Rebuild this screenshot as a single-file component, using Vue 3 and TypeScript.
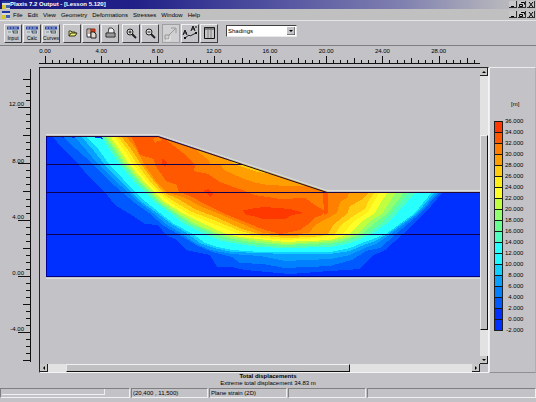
<script setup lang="ts">
import { ref } from 'vue'

interface Tick { at: number; size: number }
interface Zone { color: string; points: string }

const menus: string[] = ['File', 'Edit', 'View', 'Geometry', 'Deformations', 'Stresses', 'Window', 'Help']
const programs: string[] = ['Input', 'Calc', 'Curves']
const display = ref('Shadings')

const tickSize = (i: number): number => (i % 8 === 0 ? 12 : i % 4 === 0 ? 7 : 4)

const topTicks: Tick[] = Array.from({ length: 62 }, (_, i) => ({
  at: Math.round(6 + i * 7.03),
  size: i % 8 === 0 ? 7 : i % 4 === 0 ? 5 : 3,
}))
const topLabels = [0, 4, 8, 12, 16, 20, 24, 28].map((v) => ({ text: v.toFixed(2), x: 6 + v * 14.06 }))

const sideTicks: Tick[] = Array.from({ length: 41 }, (_, i) => ({
  at: Math.round(12 + i * 7.03),
  size: tickSize(i + 4),
}))
const sideLabels = [12, 8, 4, 0, -4].map((v) => ({ text: v.toFixed(2), y: 208 - v * 14.06 }))

const scale: string[] = [
  '#ff3800', '#ff5800', '#ff8000', '#ffa000', '#ffcc10', '#ffee18', '#ffff28', '#c0ff40', '#90ff70',
  '#68ff90', '#50ffc0', '#28ffff', '#20f8ff', '#10d0ff', '#08a0ff', '#0080ff', '#0058ff', '#0030ff', '#0030ff',
]
const scaleLabels: string[] = Array.from({ length: 20 }, (_, i) => (36 - i * 2).toFixed(3))

// Each isoline runs down the left flank, along the base and up the right flank.
const zones: Zone[] = [
  { color: '#0058ff', points: '52,136 62,148 73,158 90,178 104,191 115,205 130,214 145,224 158,225 166,235 175,239 186,250 210,255 217,267 232,267 245,270 290,274 330,271 360,269 372,256 385,250 402,235 425,213 443,192' },
  { color: '#0080ff', points: '62,136 76,149 85,157 92,164 107,179 122,192 135,203 149,213 164,226 178,234 196,245 212,252 232,257 240,263 263,264 285,268 330,266 352,260 366,251 380,248 396,234 421,213 440,192' },
  { color: '#08a0ff', points: '74,136 87,151 98,164 113,179 128,192 139,202 153,213 166,224 182,234 195,243 210,250 232,254 260,256 285,261 330,259 350,255 365,248 376,244 391,234 419,213 438,192' },
  { color: '#10d0ff', points: '81,136 94,151 104,164 118,179 131,192 143,203 157,213 170,223 188,234 200,243 214,248 232,252 260,253 285,254 330,254 350,251 364,245 375,241 388,234 417,213 435,192' },
  { color: '#28ffff', points: '86,136 99,150 109,164 123,179 135,192 146,202 160,213 174,224 193,234 205,243 218,247 232,250 260,252 285,252 330,252 350,248 362,243 373,239 386,234 415,213 432,192' },
  { color: '#50ffc0', points: '101,136 110,150 119,164 133,180 144,192 155,202 170,213 184,224 205,234 218,240 232,243 258,247 285,248 330,247 347,244 361,239 372,234 386,224 397,213 407,202 416,192' },
  { color: '#68ff90', points: '103,136 112,149 122,164 136,180 147,192 157,202 173,213 189,224 211,234 222,239 232,241 258,245 285,247 330,245 347,241 358,238 367,234 380,224 392,213 401,202 409,192' },
  { color: '#90ff70', points: '105,136 114,149 124,164 138,180 149,192 160,203 175,213 192,224 215,234 232,239 258,243 285,245 330,243 345,240 362,234 376,222 388,213 396,203 404,192' },
  { color: '#c0ff40', points: '107,136 117,150 126,164 140,180 151,192 162,202 178,213 196,224 219,234 232,237 258,241 285,244 330,241 345,238 357,234 369,222 383,213 389,203 396,192' },
  { color: '#ffff28', points: '110,136 119,149 129,164 142,179 154,192 165,202 182,213 200,222 226,234 240,237 258,239 285,242 330,240 350,234 361,222 375,213 381,202 388,192' },
  { color: '#ffee18', points: '114,136 124,150 133,164 145,179 157,192 170,202 187,213 208,222 234,232 245,236 285,240 318,238 343,234 353,222 368,212 374,202 380,192' },
  { color: '#ffcc10', points: '117,136 128,150 137,164 149,180 160,192 172,200 190,211 216,221 240,231 255,235 285,238 312,237 335,234 341,225 355,215 365,209 369,200 375,192' },
  { color: '#ffa000', points: '121,136 131,149 141,164 153,180 163,192 178,199 195,209 218,218 242,229 259,234 285,236 310,235 328,234 334,224 347,214 350,206 361,200 368,193 368,192' },
  { color: '#ff8000', points: '126,136 136,149 144,164 155,180 166,192 183,197 202,207 222,215 247,226 263,233 285,235 309,233 315,225 326,219 337,213 340,202 348,197 349,192' },
]

// Closed pockets of the high bands, drawn over the isolines.
const pockets: Zone[] = [
  { color: '#ff8000', points: '158,136 327,192 349,192 340,202 300,198 190,160' },
  { color: '#ff5800', points: '131,136 158,136 165,139 174,146 187,156 195,165 194,171 208,174 220,182 245,191 255,195 280,199 305,198 315,205 325,211 322,215 314,218 307,225 300,230 280,234 262,229 245,222 225,214 205,204 190,196 178,191 177,185 166,181 155,165 154,159 140,155 137,148' },
  { color: '#ff8000', points: '153,139 158,137 163,140 158,141 155,143' },
  { color: '#ff5800', points: '323,192 328,192 328,213 324,215' },
  { color: '#ffa000', points: '193,147 199,153 209,160 210,164 221,165 224,170 242,178 253,182 267,185 290,186 308,186' },
  { color: '#ffcc10', points: '227,159 236,165 245,168 258,172 270,174 285,178' },
  { color: '#ffee18', points: '236,162 240,164 259,170 266,171' },
  { color: '#ff3800', points: '243,210 245,210 256,208 264,207 290,209 304,213 292,215 285,219 262,219 254,216 246,215' },
  { color: '#ff3800', points: '162,159 164,159 167,163 165,167 162,163' },
  { color: '#ff3800', points: '203,191 208,189 211,192 214,194 210,197 206,193' },
]
</script>

<template>
  <div class="window">
    <header class="bar title">
      <svg class="logo" viewBox="0 0 8 8" aria-hidden="true">
        <rect width="8" height="8" fill="#d8d8d8" /><rect width="8" height="2" fill="#2038a0" />
        <rect y="4" width="4" height="4" fill="#d8c830" /><rect x="4" y="4" width="4" height="3" fill="#4060b0" />
      </svg>
      <h1>Plaxis 7.2 Output - [Lesson 5.120]</h1>
      <div class="controls">
        <button aria-label="Minimize"><svg viewBox="0 0 8 7"><path d="M2 5.5h3" /></svg></button>
        <button aria-label="Restore"><svg viewBox="0 0 8 7"><path d="M3 1.5h3.5v2M1.5 3.5h3v2h-3z" /></svg></button>
        <button aria-label="Close"><svg viewBox="0 0 8 7"><path d="M2 1l4 5M6 1l-4 5" /></svg></button>
      </div>
    </header>

    <nav class="bar menu">
      <svg class="logo" viewBox="0 0 8 8" aria-hidden="true">
        <rect width="8" height="8" fill="#d8d8d8" /><rect width="8" height="2" fill="#2038a0" />
        <rect y="4" width="4" height="4" fill="#d8c830" /><rect x="4" y="4" width="4" height="3" fill="#4060b0" />
      </svg>
      <button v-for="m in menus" :key="m" class="item">{{ m }}</button>
      <div class="controls">
        <button aria-label="Minimize document"><svg viewBox="0 0 8 7"><path d="M2 5.5h3" /></svg></button>
        <button aria-label="Restore document"><svg viewBox="0 0 8 7"><path d="M3 1.5h3.5v2M1.5 3.5h3v2h-3z" /></svg></button>
        <button aria-label="Close document"><svg viewBox="0 0 8 7"><path d="M2 1l4 5M6 1l-4 5" /></svg></button>
      </div>
    </nav>

    <div class="toolbar">
      <div class="group">
        <button v-for="p in programs" :key="p" class="tool program">
          <svg viewBox="0 0 12 8" aria-hidden="true">
            <rect width="12" height="8" fill="#d0d4d8" /><rect width="12" height="3" fill="#3048a0" />
            <path d="M1 1.5h2m1 0h2m1 0h3" stroke="#a8b8e8" />
            <path d="M1 4.5h3v2H1z" fill="#a0b0b0" /><path d="M5 4h6v3H6z" fill="#506080" /><path d="M7 5.5h3" stroke="#c8d890" />
          </svg>
          <span>{{ p }}</span>
        </button>
      </div>
      <div class="group">
        <button class="tool" aria-label="Open">
          <svg viewBox="0 0 16 16"><path d="M5 11V6h2l1 1h3v1" fill="#e8e880" stroke="#404020" /><path d="M5 11l2-3h6l-2 3z" fill="#f0f070" stroke="#303010" /></svg>
        </button>
        <button class="tool" aria-label="Copy">
          <svg viewBox="0 0 16 16"><path d="M4 4h4v8H4z" fill="#fff" stroke="#303030" /><path d="M8 4h4v5H8z" fill="#e03818" stroke="#903010" /><path d="M8 7h3l2 2v4H8z" fill="#e0d8d0" stroke="#202020" /><path d="M5 6h2M5 8h2" stroke="#806040" /></svg>
        </button>
        <button class="tool" aria-label="Print">
          <svg viewBox="0 0 16 16"><path d="M6 8l1-5h3l2 2v3" fill="#f0f0f0" stroke="#404040" /><path d="M4 8h9v4H4z" fill="#c0c0c0" stroke="#202020" /><path d="M5 10h7" stroke="#707070" /></svg>
        </button>
      </div>
      <div class="group">
        <button class="tool" aria-label="Zoom in">
          <svg viewBox="0 0 16 16"><circle cx="7" cy="7" r="3" fill="#e0e0e0" stroke="#202020" /><path d="M5.5 7h3M7 5.5v3" stroke="#202020" /><path d="M9 9l4 4" stroke="#202020" stroke-width="2" /></svg>
        </button>
        <button class="tool" aria-label="Zoom out">
          <svg viewBox="0 0 16 16"><circle cx="7" cy="7" r="3" fill="#e0e0e0" stroke="#202020" /><path d="M5.5 7h3" stroke="#202020" /><path d="M9 9l4 4" stroke="#202020" stroke-width="2" /></svg>
        </button>
      </div>
      <div class="group">
        <button class="tool pressed" aria-label="Scale">
          <svg viewBox="0 0 16 16"><path d="M2 10h4v4H2zM6 10l6-6M8 3h5v5" fill="none" stroke="#989898" /><path d="M3 15h4v-4" fill="none" stroke="#eee" /></svg>
        </button>
        <button class="tool" aria-label="Cross section">
          <svg viewBox="0 0 16 16"><path d="M1 10l2-5 2 5M2 8h3M9 6l2-5 2 5M10 4h3" fill="none" stroke="#101010" /><path d="M14 1v2" stroke="#101010" /><path d="M3 13l4-3 1 1 6-3" fill="none" stroke="#202020" /><path d="M2 12h2v2H2zM13 7h2v2h-2z" fill="#101010" /></svg>
        </button>
        <button class="tool" aria-label="Table">
          <svg viewBox="0 0 16 16"><path d="M3.5 2.5h10v11h-10z" fill="#c8c8c8" stroke="#101010" /><path d="M4 4.5h9M7 3v10M10 3v10" stroke="#808080" /><path d="M4 3h9" stroke="#303030" /></svg>
        </button>
      </div>
      <div class="picker">
        <select v-model="display" aria-label="Display"><option>Shadings</option></select>
        <svg viewBox="0 0 8 8" aria-hidden="true"><rect width="8" height="8" fill="#c4c4c8" /><path d="M0 8h8V0" fill="none" stroke="#303030" /><path d="M2 3h4L4 5z" fill="#000" /></svg>
      </div>
    </div>

    <main class="workspace">
      <svg class="top-ruler" viewBox="0 0 441 21" preserveAspectRatio="none">
        <text v-for="l in topLabels" :key="l.text" :x="l.x" y="7" text-anchor="middle">{{ l.text }}</text>
        <path v-for="t in topTicks" :key="t.at" :d="`M${t.at + 0.5} 17v-${t.size}`" />
        <path d="M0 17.5H441" />
      </svg>

      <svg class="side-ruler" viewBox="0 0 39 306" preserveAspectRatio="none">
        <text v-for="l in sideLabels" :key="l.text" x="24" :y="l.y" text-anchor="end">{{ l.text }}</text>
        <path v-for="t in sideTicks" :key="t.at" :d="`M30 ${t.at + 0.5}h-${t.size}`" />
        <path d="M30.5 2V295" />
      </svg>

      <section class="plot">
        <svg class="canvas" viewBox="40 68 440 296" preserveAspectRatio="none" role="img" aria-label="Total displacements">
          <defs>
            <clipPath id="soil"><path d="M46 136H158L327 192H480V277H46z" /></clipPath>
          </defs>
          <path d="M46 134.5H158L327 190.5H480M46 278.5H480" fill="none" stroke="#dededa" />
          <g clip-path="url(#soil)" shape-rendering="crispEdges">
            <rect x="46" y="136" width="434" height="141" fill="#0030ff" />
            <polygon v-for="z in zones" :key="z.color" :points="z.points" :fill="z.color" />
            <polygon v-for="(p, i) in pockets" :key="i" :points="p.points" :fill="p.color" />
          </g>
          <path d="M46.5 136V277" stroke="#0000a0" />
          <path d="M46 276.5H480" stroke="#000080" />
          <path d="M46 164.5H243M46 192.5H327M46 234.5H480" stroke="#100050" />
          <path d="M46 136.5H158L327 192.5H480" fill="none" stroke="#200838" />
        </svg>
        <div class="scroll vertical">
          <button aria-label="Scroll up"><svg viewBox="0 0 8 8"><path d="M2 5h4L4 3z" /></svg></button>
          <i class="track before" /><i class="thumb" /><i class="track after" />
          <button aria-label="Scroll down"><svg viewBox="0 0 8 8"><path d="M2 3h4L4 5z" /></svg></button>
        </div>
        <div class="scroll horizontal">
          <button aria-label="Scroll left"><svg viewBox="0 0 8 8"><path d="M5 2v4L3 4z" /></svg></button>
          <i class="track before" /><i class="thumb" /><i class="track after" />
          <button aria-label="Scroll right"><svg viewBox="0 0 8 8"><path d="M3 2v4l2-2z" /></svg></button>
        </div>
      </section>

      <aside class="legend">
        <p>[m]</p>
        <div class="key">
          <svg class="swatches" viewBox="0 0 9 210" preserveAspectRatio="none" aria-hidden="true" shape-rendering="crispEdges">
            <g v-for="(c, i) in scale" :key="i">
              <rect x="0" :y="i * 11" width="9" height="11" :fill="c" />
              <path :d="`M0 ${i * 11 + 0.5}h9`" stroke="#181818" />
            </g>
            <path d="M.5 0V210M8.5 0V210M0 209.5h9" stroke="#202020" />
          </svg>
          <ol><li v-for="l in scaleLabels" :key="l">{{ l }}</li></ol>
        </div>
      </aside>
    </main>

    <div class="caption">
      <h2>Total displacements</h2>
      <p>Extreme total displacement 34.83 m</p>
    </div>

    <footer class="status">
      <span class="progress"><i /></span>
      <span>(20,400 , 11,500)</span>
      <span>Plane strain (2D)</span>
      <span />
      <span />
    </footer>
  </div>
</template>

<style>
body { margin: 0; background: #c3c3c7; }
</style>

<style scoped>
.window {
  display: flex; flex-direction: column; min-height: 100vh; box-sizing: border-box; padding-bottom: 4px;
  background: #c3c3c7; color: #000; font: 6px/7px "Liberation Sans", Arial, sans-serif;
}
.window *, .window *::before { box-sizing: border-box; }
button { margin: 0; padding: 0; border: 0; background: none; color: inherit; font: inherit; }
svg { display: block; }
h1, h2, p, ol { margin: 0; padding: 0; font: inherit; }

.bar { display: flex; align-items: center; padding: 0 1px 0 2px; }
.logo { width: 8px; height: 8px; flex: none; }
.title { height: 9px; background: linear-gradient(90deg, #181880 0, #202088 25%, #5050a0 50%, #8080b0 75%, #b4b4bc 93%, #c0c0c0); color: #fff; }
.title h1 { font-weight: bold; }
.menu { height: 11px; background: #c0c0c0; gap: 5px; }
.menu .logo { margin-right: -2px; }
.menu .item { line-height: 8px; }
.controls { display: flex; gap: 1px; margin-left: auto; }
.controls button { width: 8px; height: 7px; background: #c8c8c8; border: solid #303030; border-width: 0 1px 1px 0; }
.controls svg { width: 8px; height: 7px; }
.controls path { fill: none; stroke: #000; }

.toolbar { display: flex; align-items: center; gap: 3px; height: 26px; padding: 0 4px; border-top: 1px solid #e4e4e4; border-bottom: 1px solid #808080; }
.group { display: flex; gap: 1px; }
.tool { width: 18px; height: 19px; border: 1px solid; border-color: #f0f0f0 #404040 #404040 #f0f0f0; background: #c4c4c8; display: flex; flex-direction: column; align-items: center; justify-content: center; }
.tool svg { width: 16px; height: 16px; }
.tool.program svg { width: 12px; height: 9px; }
.program span { font-size: 5px; line-height: 6px; }
.pressed { border-color: #a0a0a0; background: #d0d0d2; }
.picker { position: relative; width: 71px; margin: 0 0 4px 5px; }
.picker select { display: block; appearance: none; width: 100%; height: 12px; margin: 0; padding: 0 10px 0 1px; border: 1px solid; border-color: #404040 #e8e8e8 #e8e8e8 #404040; border-radius: 0; background: #fff; color: #000; font: inherit; line-height: 10px; }
.picker svg { position: absolute; right: 2px; top: 2px; width: 8px; height: 8px; pointer-events: none; }

.workspace { flex: 1; display: grid; grid-template-columns: 39px minmax(0, 1fr) 47px; grid-template-rows: 21px minmax(306px, 1fr); }
.top-ruler { grid-column: 2; width: calc(100% - 9px); height: 21px; overflow: visible; }
.side-ruler { grid-column: 1; grid-row: 2; width: 39px; height: 100%; overflow: visible; }
.top-ruler path, .side-ruler path { stroke: #101010; shape-rendering: crispEdges; }
.plot { grid-column: 2; grid-row: 2; display: grid; grid-template-columns: minmax(0, 1fr) 8px; grid-template-rows: minmax(0, 1fr) 8px; border: 1px solid; border-color: #282828 #f4f4f4 #f4f4f4 #282828; }
.canvas { width: 100%; height: 100%; }
.scroll { display: flex; background: #e2e2e2; }
.scroll button { flex: none; width: 8px; height: 8px; background: #c8c8c8; border: solid #202020; border-width: 0 1px 1px 0; }
.scroll svg { width: 8px; height: 8px; }
.vertical { flex-direction: column; }
.before { flex: 59; }
.thumb { flex: 194; background: #c0c0c2; border: 1px solid; border-color: #f0f0f0 #101010 #101010 #e8e8e8; }
.after { flex: 26; }
.horizontal .before { flex: 18; }
.horizontal .thumb { flex: 283; }
.horizontal .after { flex: 123; }

.legend { grid-column: 3; grid-row: 2; padding: 33px 0 0 4px; border: 1px solid; border-color: #ececec #b0b0b4 #909090 #ececec; }
.legend p { margin: 0 0 13px 17px; }
.key { display: flex; gap: 2px; }
.swatches { width: 9px; height: 210px; }
ol { list-style: none; margin-top: -5px; }
li { height: 11px; line-height: 11px; text-align: right; }

.caption { height: 15px; text-align: center; }
.caption h2 { font-weight: bold; }
.status { display: grid; grid-template-columns: 130fr 77fr 78fr 78fr 169fr; gap: 1px; height: 10px; }
.status > span { border: 1px solid; border-color: #808080 #f0f0f0 #f0f0f0 #808080; padding-left: 1px; line-height: 8px; white-space: nowrap; }
.progress i { display: block; width: 81%; height: 6px; border: solid #f0f0f0; border-width: 0 1px 1px 0; }
</style>
